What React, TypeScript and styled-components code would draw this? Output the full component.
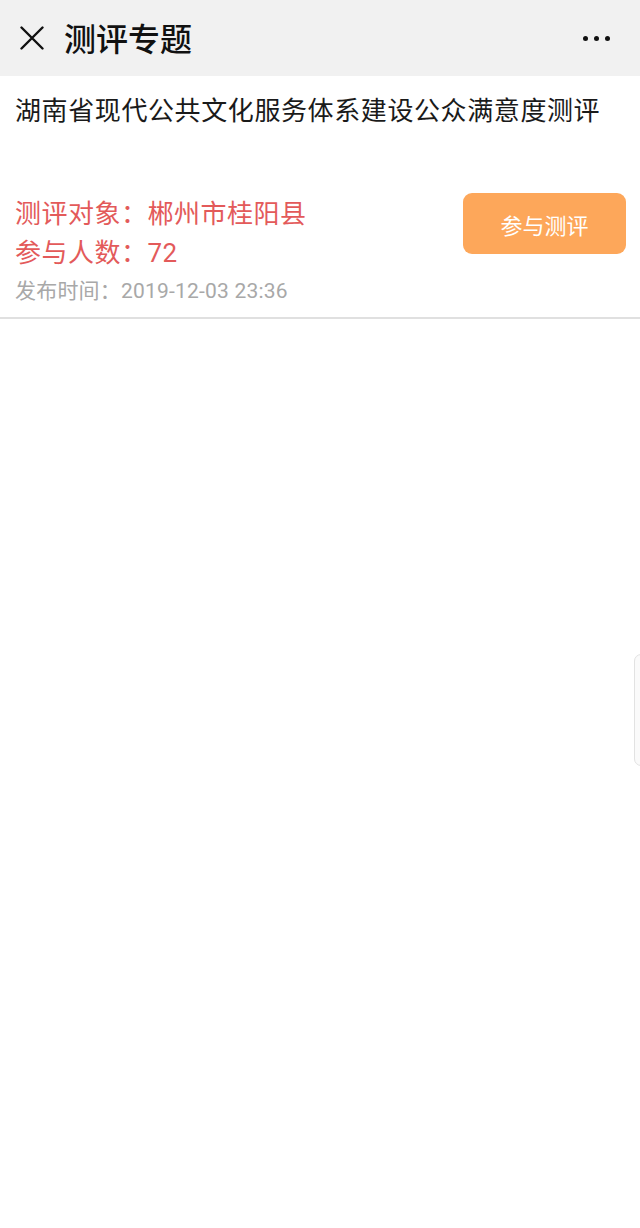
import React from "react";
import styled, { createGlobalStyle } from "styled-components";

const Global = createGlobalStyle`
  html, body { margin: 0; padding: 0; background: #ffffff; }
  body { font-family: "Noto Sans CJK SC", Roboto, "Noto Sans", sans-serif; }
  * { box-sizing: border-box; }
`;

const Page = styled.div`
  position: relative;
  width: 640px;
  height: 1228px;
  background: #ffffff;
  overflow: hidden;
`;

const Header = styled.header`
  height: 76px;
  background: #f1f1f1;
  display: flex;
  align-items: center;
  padding: 0 30px 0 19px;
`;

const CloseBtn = styled.div`
  width: 26px;
  height: 26px;
  display: flex;
  align-items: center;
  justify-content: center;
  margin-right: 19px;
`;

const HeaderTitle = styled.h1`
  margin: 0;
  flex: 1;
  font-size: 32px;
  font-weight: 500;
  color: #111111;
  line-height: 1;
  font-family: "Noto Sans CJK SC", sans-serif;
  position: relative;
  top: -1px;
`;

const Dots = styled.div`
  display: flex;
  gap: 6px;
  align-items: center;
`;

const Dot = styled.span`
  width: 5px;
  height: 5px;
  border-radius: 50%;
  background: #111;
`;

const Card = styled.section`
  padding: 13px 15px 8px 15px;
  border-bottom: 2px solid #e0e0e0;
`;

const Title = styled.div`
  font-size: 26px;
  line-height: 40px;
  color: #1a1a1a;
  font-family: "Noto Sans CJK SC", sans-serif;
  letter-spacing: 0.6px;
`;

const Row = styled.div`
  display: flex;
  align-items: flex-start;
  justify-content: space-between;
  margin-top: 66px;
`;

const Info = styled.div`
  display: flex;
  flex-direction: column;
`;

const RedLine = styled.div`
  font-size: 26px;
  line-height: 39px;
  color: #e35a5a;
  font-family: Roboto, "Noto Sans CJK SC", sans-serif;
  letter-spacing: 0.5px;
`;

const DateLine = styled.div`
  font-size: 21px;
  line-height: 36px;
  color: #a8a8a8;
  font-family: Roboto, "Noto Sans CJK SC", sans-serif;
  letter-spacing: 0.2px;
`;

const Join = styled.button`
  width: 163px;
  height: 61px;
  border: none;
  border-radius: 9px;
  background: #fda75a;
  color: #ffffff;
  font-size: 22px;
  font-family: "Noto Sans CJK SC", sans-serif;
  margin-top: -2px;
  margin-right: -1px;
  padding: 0;
`;

const EdgeTab = styled.div`
  position: absolute;
  right: -8px;
  top: 654px;
  width: 14px;
  height: 112px;
  border: 1.5px solid #e2e2e2;
  border-radius: 7px;
  background: #fafafa;
`;

export default function App() {
  return (
    <Page>
      <Global />
      <Header>
        <CloseBtn>
          <svg width="24" height="24" viewBox="0 0 24 24">
            <path d="M1.5 1.5 L22.5 22.5 M22.5 1.5 L1.5 22.5" stroke="#111" strokeWidth="2.4" strokeLinecap="round" />
          </svg>
        </CloseBtn>
        <HeaderTitle>测评专题</HeaderTitle>
        <Dots>
          <Dot />
          <Dot />
          <Dot />
        </Dots>
      </Header>
      <Card>
        <Title>湖南省现代公共文化服务体系建设公众满意度测评</Title>
        <Row>
          <Info>
            <RedLine>测评对象：郴州市桂阳县</RedLine>
            <RedLine>参与人数：72</RedLine>
            <DateLine>发布时间：2019-12-03 23:36</DateLine>
          </Info>
          <Join>参与测评</Join>
        </Row>
      </Card>
      <EdgeTab />
    </Page>
  );
}
